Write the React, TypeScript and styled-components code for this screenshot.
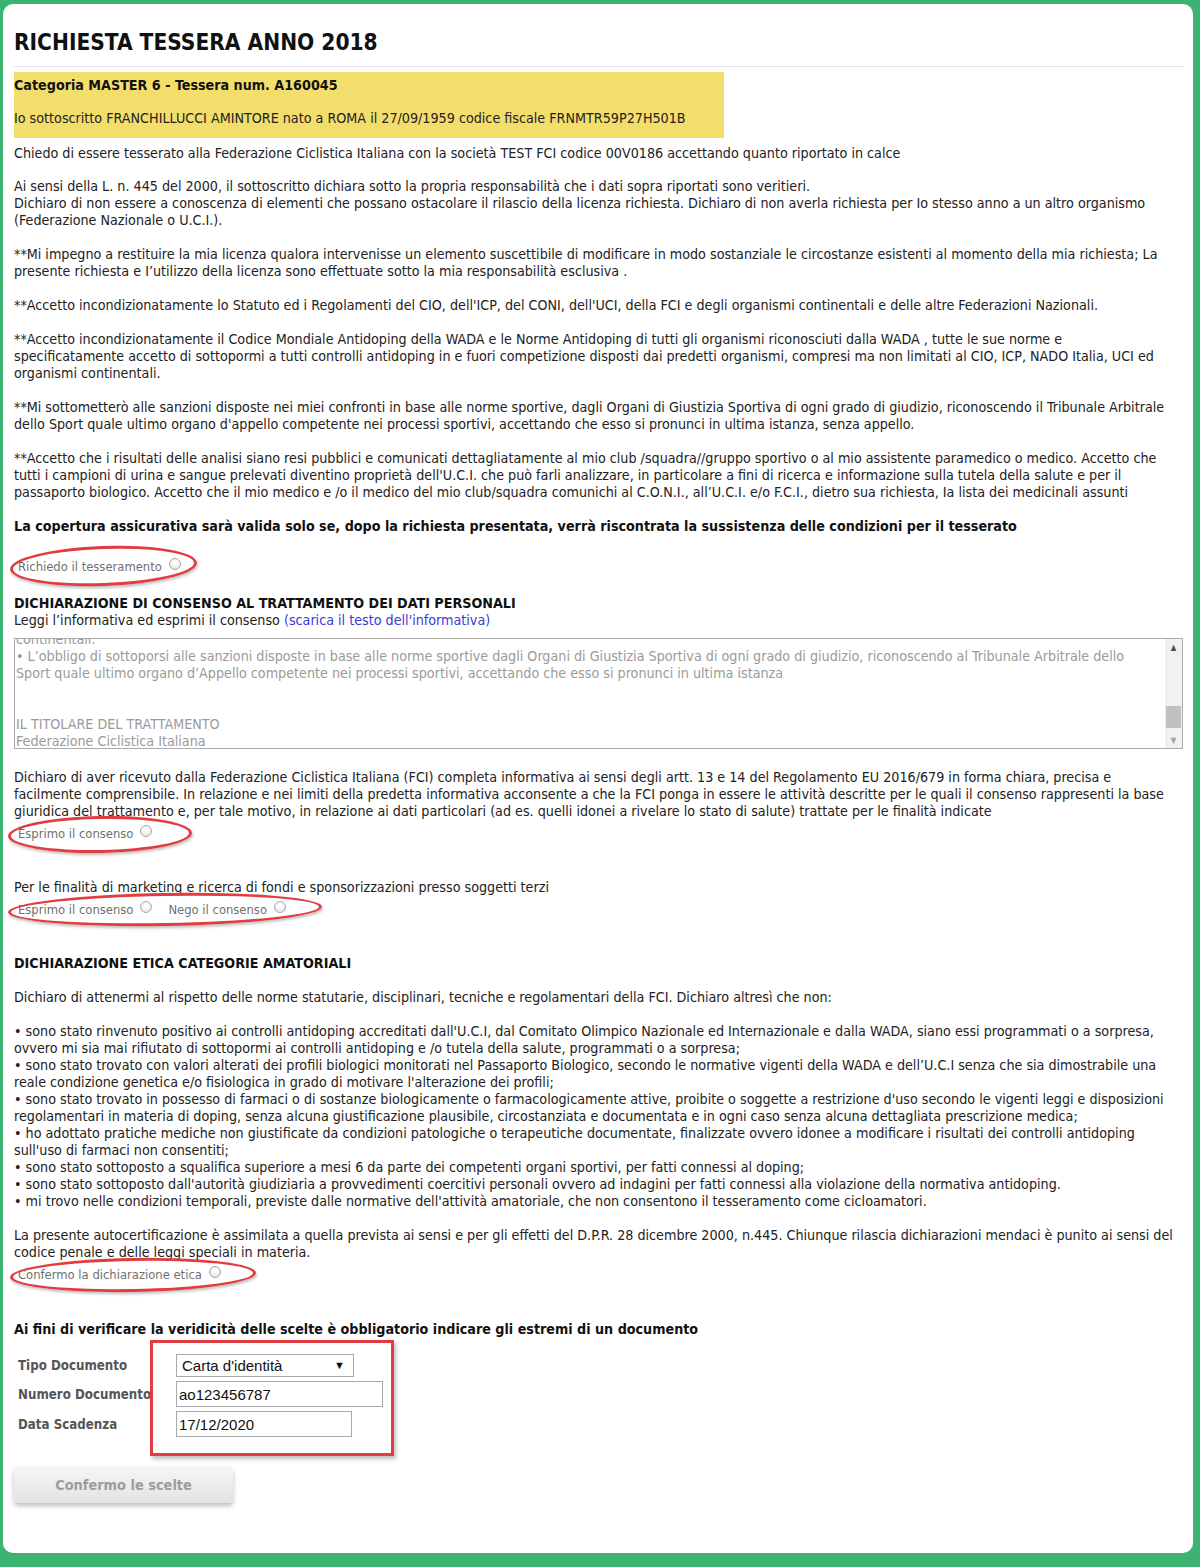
import * as React from 'react';
import styled, { createGlobalStyle } from 'styled-components';

const GlobalStyle = createGlobalStyle`
  html, body {
    margin: 0;
    padding: 0;
    background: #3cb371;
  }
  * {
    box-sizing: border-box;
  }
`;

const Frame = styled.div`
  min-height: 100vh;
  display: flex;
  flex-direction: column;
  padding: 4px 7px 14px 3px;
  background: #3cb371;
`;

const Page = styled.div`
  flex: 1;
  background: #fff;
  border-radius: 10px;
  padding: 24px 19px 40px 11px;
  font-family: 'DejaVu Sans Condensed', 'DejaVu Sans', Tahoma, sans-serif;
  font-size: 14.2px;
  line-height: 17px;
  color: #222;
`;

const Title = styled.h1`
  margin: 0;
  font-size: 22.5px;
  line-height: 28px;
  font-weight: bold;
  color: #111;
`;

const Rule = styled.hr`
  margin: 10px -9px 5px 0;
  border: none;
  border-top: 1px dotted #c8c8c8;
  height: 0;
`;

const Highlight = styled.div`
  width: 710px;
  background: #f4de6b;
  padding: 5px 0 11px;
  margin-bottom: 7px;
`;

const Text = styled.p<{ $mb?: number }>`
  margin: 0 0 ${(p) => (p.$mb ?? 17)}px;
`;

const Bold = styled.p<{ $mb?: number }>`
  margin: 0 0 ${(p) => (p.$mb ?? 17)}px;
  font-weight: bold;
  color: #111;
`;

const Link = styled.a`
  color: #3b3bd0;
  text-decoration: none;
`;

const RadioRow = styled.div<{ $mb: number }>`
  position: relative;
  display: flex;
  align-items: center;
  gap: 16px;
  padding-left: 4px;
  margin: 5px 0 ${(p) => p.$mb}px;
`;

const Choice = styled.label`
  display: flex;
  align-items: center;
  gap: 7px;
  color: #707070;
  font-size: 12.9px;
`;

const Radio = styled.span`
  display: inline-block;
  width: 12px;
  height: 12px;
  border-radius: 50%;
  border: 1px solid #a8a8a8;
  background: radial-gradient(circle at 50% 35%, #ffffff 20%, #dcdcdc 100%);
  margin-top: -6px;
`;

const Ellipse = styled.span<{ $w: number; $h: number; $x: number; $y: number; $r?: number }>`
  position: absolute;
  left: ${(p) => p.$x}px;
  top: ${(p) => p.$y}px;
  width: ${(p) => p.$w}px;
  height: ${(p) => p.$h}px;
  border: 3px solid #e23b40;
  border-radius: 50%;
  transform: rotate(${(p) => p.$r ?? 0}deg);
  box-shadow: 1px 2px 3px rgba(0, 0, 0, 0.25);
  pointer-events: none;
`;

const InfoBox = styled.div`
  display: flex;
  height: 111px;
  margin: 9px -9px 20px 0;
  border: 1px solid #ababab;
  overflow: hidden;
`;

const InfoText = styled.div`
  flex: 1;
  padding: 0 30px 0 1px;
  margin-top: -8px;
  color: #9a9a9a;
`;

const ScrollBar = styled.div`
  width: 17px;
  background: #f1f1f1;
  display: flex;
  flex-direction: column;
  align-items: center;
  justify-content: space-between;
  padding: 4px 0 2px;
  font-size: 8px;
  line-height: 10px;
`;

const ScrollArrow = styled.span<{ $light?: boolean }>`
  color: ${(p) => (p.$light ? '#a3a3a3' : '#505050')};
`;

const ScrollThumb = styled.span`
  width: 15px;
  height: 22px;
  background: #c1c1c1;
  margin-top: auto;
  margin-bottom: 8px;
`;

const DocArea = styled.div`
  position: relative;
  margin-bottom: 30px;
`;

const DocTable = styled.div`
  display: grid;
  grid-template-columns: 158px auto;
  row-gap: 4px;
  align-items: center;
  padding-left: 4px;
`;

const DocLabel = styled.span`
  font-family: Verdana, 'DejaVu Sans Condensed', sans-serif;
  font-weight: bold;
  font-size: 13.2px;
  color: #555;
  white-space: nowrap;
  overflow: hidden;
`;

const SelectBox = styled.div`
  width: 178px;
  height: 23px;
  border: 1px solid #a9a9a9;
  display: flex;
  align-items: center;
  justify-content: space-between;
  padding: 0 8px 0 5px;
  font-family: 'Liberation Sans', Arial, sans-serif;
  font-size: 15px;
  color: #111;
`;

const SelectArrow = styled.span`
  font-size: 11px;
`;

const Field = styled.input<{ $w: number }>`
  width: ${(p) => p.$w}px;
  height: 26px;
  border: 1px solid #a9a9a9;
  padding: 0 2px;
  font-family: 'Liberation Sans', Arial, sans-serif;
  font-size: 15px;
  color: #111;
  outline: none;
`;

const RedBox = styled.span`
  position: absolute;
  left: 136px;
  top: -14px;
  width: 244px;
  height: 116px;
  border: 3px solid #e23b40;
  box-shadow: 2px 3px 4px rgba(0, 0, 0, 0.25);
  pointer-events: none;
`;

const SubmitButton = styled.button`
  width: 219px;
  height: 36px;
  border: none;
  border-radius: 4px;
  background: linear-gradient(#f5f5f5, #e3e3e3);
  box-shadow: 0 3px 5px rgba(0, 0, 0, 0.25);
  font-family: 'DejaVu Sans Condensed', Tahoma, sans-serif;
  font-weight: bold;
  font-size: 14.4px;
  color: #9c9c9c;
`;

const bullets = [
  "sono stato rinvenuto positivo ai controlli antidoping accreditati dall'U.C.I, dal Comitato Olimpico Nazionale ed Internazionale e dalla WADA, siano essi programmati o a sorpresa, ovvero mi sia mai rifiutato di sottopormi ai controlli antidoping e /o tutela della salute, programmati o a sorpresa;",
  "sono stato trovato con valori alterati dei profili biologici monitorati nel Passaporto Biologico, secondo le normative vigenti della WADA e dell’U.C.I senza che sia dimostrabile una reale condizione genetica e/o fisiologica in grado di motivare l'alterazione dei profili;",
  "sono stato trovato in possesso di farmaci o di sostanze biologicamente o farmacologicamente attive, proibite o soggette a restrizione d'uso secondo le vigenti leggi e disposizioni regolamentari in materia di doping, senza alcuna giustificazione plausibile, circostanziata e documentata e in ogni caso senza alcuna dettagliata prescrizione medica;",
  "ho adottato pratiche mediche non giustificate da condizioni patologiche o terapeutiche documentate, finalizzate ovvero idonee a modificare i risultati dei controlli antidoping sull'uso di farmaci non consentiti;",
  'sono stato sottoposto a squalifica superiore a mesi 6 da parte dei competenti organi sportivi, per fatti connessi al doping;',
  "sono stato sottoposto dall'autorità giudiziaria a provvedimenti coercitivi personali ovvero ad indagini per fatti connessi alla violazione della normativa antidoping.",
  "mi trovo nelle condizioni temporali, previste dalle normative dell'attività amatoriale, che non consentono il tesseramento come cicloamatori.",
];

export default function App() {
  return (
    <Frame>
      <GlobalStyle />
      <Page>
        <Title>RICHIESTA TESSERA ANNO 2018</Title>
        <Rule />
        <Highlight>
          <Bold $mb={16}>Categoria MASTER 6 - Tessera num. A160045</Bold>
          <Text $mb={0}>
            Io sottoscritto FRANCHILLUCCI AMINTORE nato a ROMA il 27/09/1959 codice fiscale FRNMTR59P27H501B
          </Text>
        </Highlight>
        <Text $mb={16}>
          Chiedo di essere tesserato alla Federazione Ciclistica Italiana con la società TEST FCI codice 00V0186
          accettando quanto riportato in calce
        </Text>
        <Text>
          Ai sensi della L. n. 445 del 2000, il sottoscritto dichiara sotto la propria responsabilità che i dati sopra
          riportati sono veritieri.
          <br />
          Dichiaro di non essere a conoscenza di elementi che possano ostacolare il rilascio della licenza richiesta.
          Dichiaro di non averla richiesta per Io stesso anno a un altro organismo (Federazione Nazionale o U.C.I.).
        </Text>
        <Text>
          **Mi impegno a restituire la mia licenza qualora intervenisse un elemento suscettibile di modificare in modo
          sostanziale le circostanze esistenti al momento della mia richiesta; La presente richiesta e I’utilizzo della
          licenza sono effettuate sotto la mia responsabilità esclusiva .
        </Text>
        <Text>
          **Accetto incondizionatamente lo Statuto ed i Regolamenti del CIO, dell'ICP, del CONI, dell'UCI, della FCI e
          degli organismi continentali e delle altre Federazioni Nazionali.
        </Text>
        <Text>
          **Accetto incondizionatamente il Codice Mondiale Antidoping della WADA e le Norme Antidoping di tutti gli
          organismi riconosciuti dalla WADA , tutte le sue norme e specificatamente accetto di sottopormi a tutti
          controlli antidoping in e fuori competizione disposti dai predetti organismi, compresi ma non limitati al CIO,
          ICP, NADO Italia, UCI ed organismi continentali.
        </Text>
        <Text>
          **Mi sottometterò alle sanzioni disposte nei miei confronti in base alle norme sportive, dagli Organi di
          Giustizia Sportiva di ogni grado di giudizio, riconoscendo il Tribunale Arbitrale dello Sport quale ultimo
          organo d'appello competente nei processi sportivi, accettando che esso si pronunci in ultima istanza, senza
          appello.
        </Text>
        <Text>
          **Accetto che i risultati delle analisi siano resi pubblici e comunicati dettagliatamente al mio club
          /squadra//gruppo sportivo o al mio assistente paramedico o medico. Accetto che tutti i campioni di urina e
          sangue prelevati diventino proprietà dell'U.C.I. che può farli analizzare, in particolare a fini di ricerca e
          informazione sulla tutela della salute e per il passaporto biologico. Accetto che il mio medico e /o il medico
          del mio club/squadra comunichi al C.O.N.I., all’U.C.I. e/o F.C.I., dietro sua richiesta, Ia lista dei
          medicinali assunti
        </Text>
        <Bold $mb={23}>
          La copertura assicurativa sarà valida solo se, dopo la richiesta presentata, verrà riscontrata la sussistenza
          delle condizioni per il tesserato
        </Bold>
        <RadioRow $mb={20}>
          <Choice>
            Richiedo il tesseramento <Radio />
          </Choice>
          <Ellipse $x={-4} $y={-12} $w={187} $h={40} $r={-2} />
        </RadioRow>
        <Bold $mb={0}>DICHIARAZIONE DI CONSENSO AL TRATTAMENTO DEI DATI PERSONALI</Bold>
        <Text $mb={0}>
          Leggi l’informativa ed esprimi il consenso <Link href="#">(scarica il testo dell'informativa)</Link>
        </Text>
        <InfoBox>
          <InfoText>
            continentali.
            <br />• L’obbligo di sottoporsi alle sanzioni disposte in base alle norme sportive dagli Organi di Giustizia
            Sportiva di ogni grado di giudizio, riconoscendo al Tribunale Arbitrale dello Sport quale ultimo organo
            d’Appello competente nei processi sportivi, accettando che esso si pronunci in ultima istanza
            <br />
            <br />
            <br />
            IL TITOLARE DEL TRATTAMENTO
            <br />
            Federazione Ciclistica Italiana
          </InfoText>
          <ScrollBar>
            <ScrollArrow>▲</ScrollArrow>
            <ScrollThumb />
            <ScrollArrow $light>▼</ScrollArrow>
          </ScrollBar>
        </InfoBox>
        <Text $mb={0}>
          Dichiaro di aver ricevuto dalla Federazione Ciclistica Italiana (FCI) completa informativa ai sensi degli artt.
          13 e 14 del Regolamento EU 2016/679 in forma chiara, precisa e facilmente comprensibile. In relazione e nei
          limiti della predetta informativa acconsente a che la FCI ponga in essere le attività descritte per le quali il
          consenso rappresenti la base giuridica del trattamento e, per tale motivo, in relazione ai dati particolari (ad
          es. quelli idonei a rivelare lo stato di salute) trattate per le finalità indicate
        </Text>
        <RadioRow $mb={37}>
          <Choice>
            Esprimo il consenso <Radio />
          </Choice>
          <Ellipse $x={-6} $y={-9} $w={184} $h={37} $r={-1} />
        </RadioRow>
        <Text $mb={0}>Per le finalità di marketing e ricerca di fondi e sponsorizzazioni presso soggetti terzi</Text>
        <RadioRow $mb={37}>
          <Choice>
            Esprimo il consenso <Radio />
          </Choice>
          <Choice>
            Nego il consenso <Radio />
          </Choice>
          <Ellipse $x={-6} $y={-8} $w={314} $h={33} $r={-1} />
        </RadioRow>
        <Bold>DICHIARAZIONE ETICA CATEGORIE AMATORIALI</Bold>
        <Text>
          Dichiaro di attenermi al rispetto delle norme statutarie, disciplinari, tecniche e regolamentari della FCI.
          Dichiaro altresì che non:
        </Text>
        <Text>
          {bullets.map((b, i) => (
            <React.Fragment key={i}>
              {i > 0 && <br />}• {b}
            </React.Fragment>
          ))}
        </Text>
        <Text $mb={0}>
          La presente autocertificazione è assimilata a quella prevista ai sensi e per gli effetti del D.P.R. 28 dicembre
          2000, n.445. Chiunque rilascia dichiarazioni mendaci è punito ai sensi del codice penale e delle leggi speciali
          in materia.
        </Text>
        <RadioRow $mb={38}>
          <Choice>
            Confermo la dichiarazione etica <Radio />
          </Choice>
          <Ellipse $x={-4} $y={-8} $w={246} $h={34} $r={-1} />
        </RadioRow>
        <Bold $mb={16}>
          Ai fini di verificare la veridicità delle scelte è obbligatorio indicare gli estremi di un documento
        </Bold>
        <DocArea>
          <DocTable>
            <DocLabel>Tipo Documento</DocLabel>
            <SelectBox>
              <span>Carta d'identità</span>
              <SelectArrow>▼</SelectArrow>
            </SelectBox>
            <DocLabel>Numero Documento</DocLabel>
            <Field $w={207} readOnly defaultValue="ao123456787" />
            <DocLabel>Data Scadenza</DocLabel>
            <Field $w={176} readOnly defaultValue="17/12/2020" />
          </DocTable>
          <RedBox />
        </DocArea>
        <SubmitButton type="button">Confermo le scelte</SubmitButton>
      </Page>
    </Frame>
  );
}
